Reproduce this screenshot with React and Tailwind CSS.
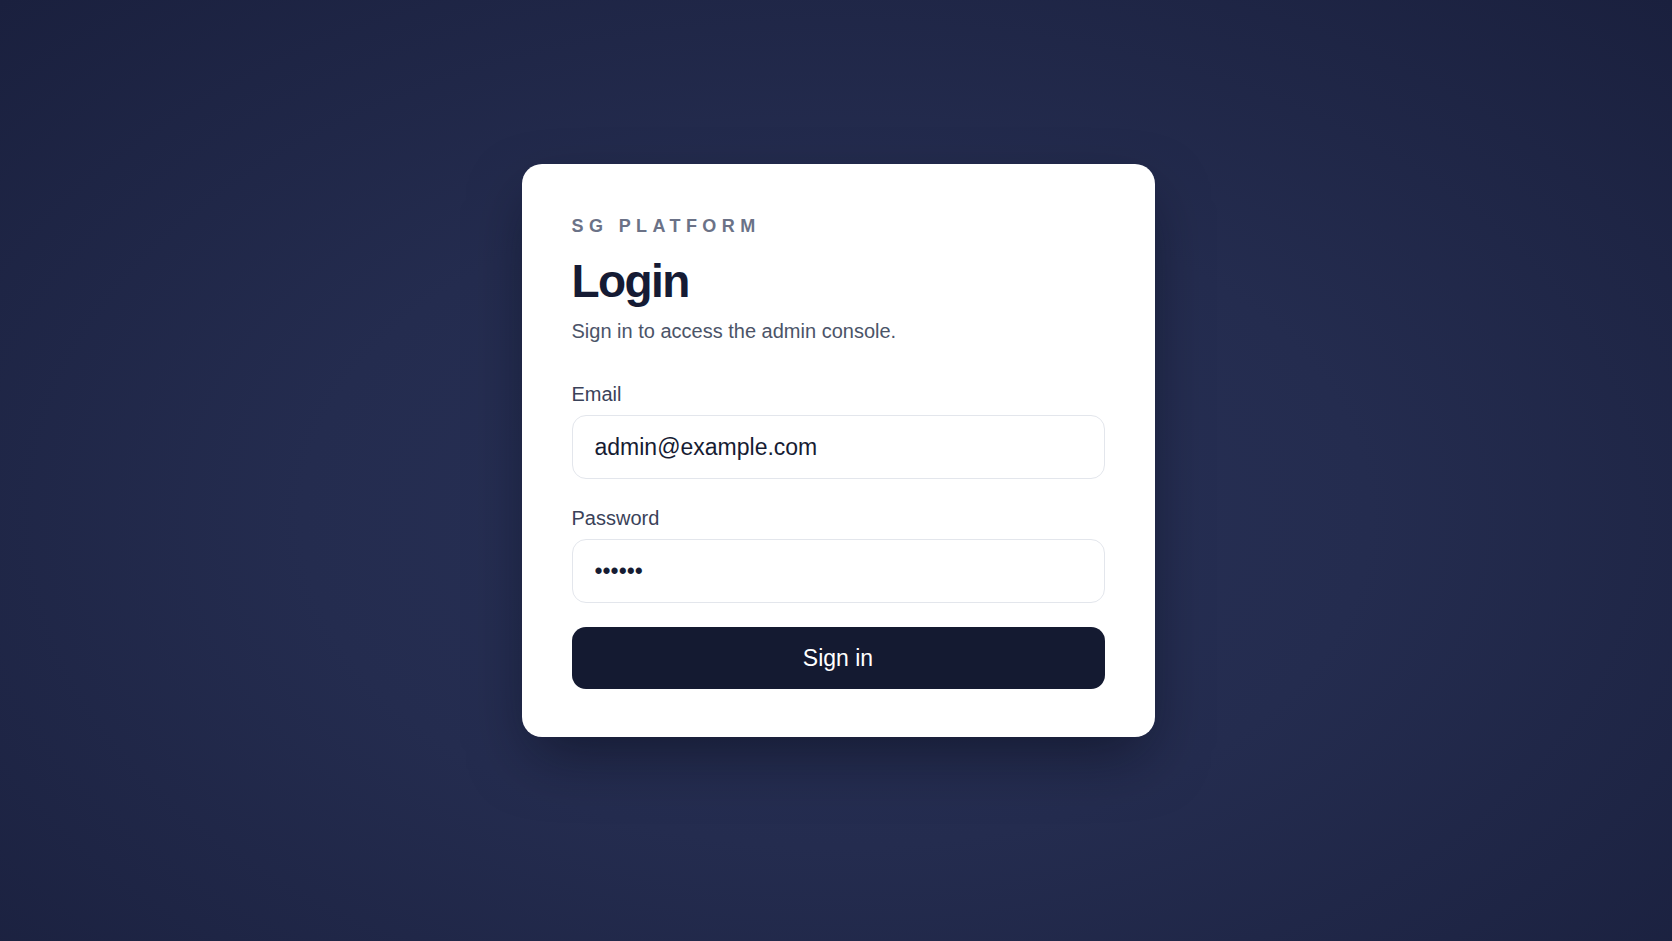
import React from "react";

export default function App() {
  return (
    <div className="min-h-screen w-full flex items-center justify-center pb-[40px] pl-[4px] bg-[radial-gradient(ellipse_at_50%_55%,#283157_0%,#242c4f_45%,#1a203e_100%)] font-['Liberation_Sans',Arial,Helvetica,sans-serif]">
      <div className="w-[633px] rounded-[20px] bg-white pt-[50px] px-[50px] pb-[48px] shadow-[0_25px_60px_-10px_rgba(5,8,20,0.5)]">
        <div className="text-[18px] leading-[24px] font-bold tracking-[0.3em] text-[#6b7287]">
          SG PLATFORM
        </div>
        <h1 className="mt-[16px] text-[46px] leading-[55px] font-bold tracking-[-0.035em] text-[#151b34]">
          Login
        </h1>
        <p className="mt-[8px] text-[20px] leading-[28px] text-[#4b5468]">
          Sign in to access the admin console.
        </p>
        <form className="mt-[35px] flex flex-col" onSubmit={(e) => e.preventDefault()}>
          <label className="block text-[20px] leading-[28px] text-[#3a4259] mb-[7px]">Email</label>
          <input
            type="email"
            defaultValue="admin@example.com"
            readOnly
            className="w-full h-[64px] rounded-[14px] border-[1.5px] border-[#e3e6ec] bg-white px-[22px] text-[23px] text-[#161c33] outline-none"
          />
          <label className="mt-[25px] block text-[20px] leading-[28px] text-[#3a4259] mb-[7px]">Password</label>
          <input
            type="password"
            defaultValue="123456"
            readOnly
            className="w-full h-[64px] rounded-[14px] border-[1.5px] border-[#e3e6ec] bg-white px-[22px] text-[23px] text-[#161c33] outline-none"
          />
          <button
            type="submit"
            className="mt-[24px] w-full h-[62px] rounded-[14px] bg-[#141a31] text-white text-[23px] flex items-center justify-center"
          >
            Sign in
          </button>
        </form>
      </div>
    </div>
  );
}
